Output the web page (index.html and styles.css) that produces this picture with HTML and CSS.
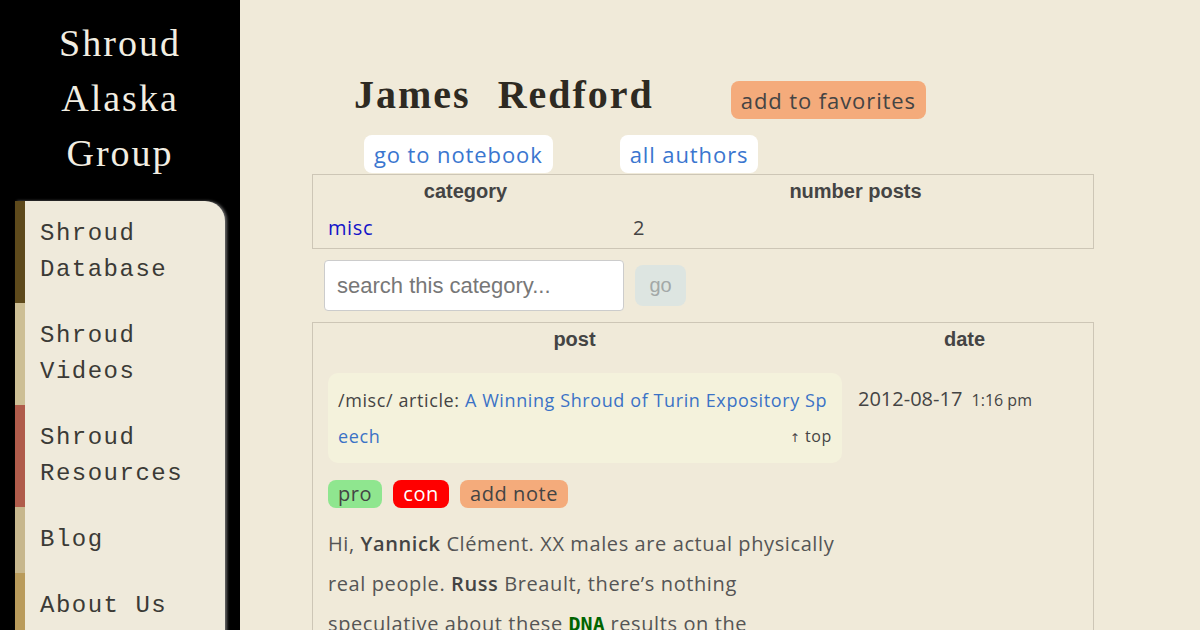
FILE: index.html
```html
<!DOCTYPE html>
<html>
<head>
    <title>James Redford - Shroud Alaska Group</title>
    <link rel="stylesheet" href="styles.css">
</head>
<body>
    <div class="layout">
        <aside class="sidebar">
            <div class="site-title">Shroud Alaska Group</div>
            <nav class="nav">
                <a class="nav-item nav-db" href="#">Shroud Database</a>
                <a class="nav-item nav-videos" href="#">Shroud Videos</a>
                <a class="nav-item nav-res" href="#">Shroud Resources</a>
                <a class="nav-item nav-blog" href="#">Blog</a>
                <a class="nav-item nav-about" href="#">About Us</a>
            </nav>
        </aside>

        <main class="main">
            <div class="author-head">
                <h1>James Redford</h1>
                <a class="btn btn-fav" href="#">add to favorites</a>
            </div>
            <div class="author-links">
                <a class="btn btn-white" href="#">go to notebook</a>
                <a class="btn btn-white" href="#">all authors</a>
            </div>

            <table class="grid cat-table">
                <tr>
                    <th class="col-cat">category</th>
                    <th>number posts</th>
                </tr>
                <tr>
                    <td><a class="cat-link" href="#">misc</a></td>
                    <td>2</td>
                </tr>
            </table>

            <form class="search">
                <input type="text" placeholder="search this category...">
                <button type="button">go</button>
            </form>

            <table class="grid post-table">
                <tr>
                    <th class="col-post">post</th>
                    <th>date</th>
                </tr>
                <tr>
                    <td class="post-cell">
                        <div class="post-box">
                            /misc/ article: <a href="#">A Winning Shroud of Turin Expository Speech</a>
                            <a class="top" href="#"><span class="arrow">&uarr;</span> top</a>
                        </div>
                        <div class="tags">
                            <span class="tag tag-pro">pro</span>
                            <span class="tag tag-con">con</span>
                            <span class="tag tag-note">add note</span>
                        </div>
                        <p class="post-text">Hi, <b>Yannick</b> Clément. XX males are actual physically real people. <b>Russ</b> Breault, there’s nothing speculative about these <code>DNA</code> results on the bloodstains of the Shroud of Turin, which show the man was male but lacked a Y chromosome.</p>
                    </td>
                    <td class="date-cell">
                        <div class="post-date">2012-08-17 <small>1:16 pm</small></div>
                    </td>
                </tr>
            </table>
        </main>
    </div>
</body>
</html>
```

FILE: styles.css
```css
body {
    margin: 0;
    background-color: #f0ead9;
    font-family: "Open Sans", sans-serif;
    letter-spacing: 0.6px;
    color: #444;
}

a {
    text-decoration: none;
}

.layout {
    display: flex;
    min-height: 100vh;
}

/* sidebar */

.sidebar {
    width: 240px;
    flex-shrink: 0;
    background-color: #000;
}

.site-title {
    padding: 16px 20px 0;
    font-family: "Liberation Serif", serif;
    font-size: 38px;
    line-height: 55px;
    letter-spacing: 2px;
    text-align: center;
    color: #f2eee2;
}

.nav {
    margin: 20px 15px 0;
    width: 210px;
    background-color: #efeadb;
    border-top-right-radius: 20px;
    box-shadow: 2px 0 3px #666;
    overflow: hidden;
}

.nav-item {
    display: block;
    padding: 15px 15px;
    border-left: 10px solid;
    font-family: "Liberation Mono", monospace;
    font-size: 24px;
    line-height: 36px;
    letter-spacing: 1.5px;
    color: #3b3a36;
}

.nav-db { border-color: #5e4a1c; }
.nav-videos { border-color: #cdbf95; }
.nav-res { border-color: #b05c4b; }
.nav-blog { border-color: #c7b78d; }
.nav-about { border-color: #b99b5b; }

/* author header */

.author-head {
    display: flex;
    align-items: flex-end;
    gap: 77px;
    padding: 70px 0 0 114px;
}

.author-head h1 {
    margin: 0;
    font-family: "Liberation Serif", serif;
    font-size: 40px;
    line-height: 50px;
    letter-spacing: 2px;
    word-spacing: 15px;
    color: #2e2a22;
}

.btn {
    display: inline-block;
    padding: 0 10px;
    border-radius: 8px;
    font-size: 22px;
    line-height: 38px;
    letter-spacing: 0.9px;
}

.btn-fav {
    margin-bottom: 1px;
    background-color: #f4ab7b;
    color: #444;
}

.btn-white {
    background-color: #fff;
    color: #3a76cf;
}

.author-links {
    display: flex;
    gap: 67px;
    padding: 15px 0 0 124px;
}

/* tables */

.grid {
    margin: 1px 0 0 72px;
    width: 782px;
    border-collapse: collapse;
    border: 1px solid #cdc6b6;
}

.grid th {
    padding: 4px 15px;
    font-family: "Liberation Sans", Arial, sans-serif;
    font-size: 20px;
    line-height: 24px;
    letter-spacing: 0;
    color: #444;
}

.grid td {
    padding: 5px 15px 4px;
    font-size: 20px;
    line-height: 32px;
    vertical-align: top;
}

.col-cat {
    width: 275px;
}

.cat-link {
    color: #1414c8;
}

.search {
    display: flex;
    align-items: center;
    gap: 11px;
    margin: 11px 0 0 84px;
}

.search input {
    box-sizing: border-box;
    width: 300px;
    height: 51px;
    padding: 0 12px;
    border: 1px solid #ccc;
    border-radius: 4px;
    font-family: "Liberation Sans", Arial, sans-serif;
    font-size: 22px;
}

.search input::placeholder {
    color: #777;
}

.search button {
    width: 51px;
    height: 41px;
    border: none;
    border-radius: 8px;
    background-color: #dde5e1;
    font-family: "Liberation Sans", Arial, sans-serif;
    font-size: 20px;
    color: #a3a8a7;
}

.post-table {
    margin-top: 11px;
}

.post-table th {
    padding: 4px 22px 4px 8px;
}

.col-post {
    width: 507px;
}

.grid .post-cell {
    padding: 18px 8px 0 15px;
}

.post-box {
    padding: 9px 10px;
    border-radius: 10px;
    background-color: #f4f2dc;
    font-size: 18px;
    line-height: 36px;
    letter-spacing: 0.6px;
    color: #444;
}

.post-box a {
    color: #3b72c6;
    word-break: break-all;
}

.post-box .top {
    float: right;
    font-size: 16px;
    color: #444;
}

.arrow {
    font-family: "DejaVu Sans", sans-serif;
    font-size: 12px;
    color: #444;
}

.tags {
    display: flex;
    gap: 11px;
    margin-top: 17px;
}

.tag {
    padding: 0 10px;
    border-radius: 8px;
    font-size: 20px;
    line-height: 28px;
    color: #444;
}

.tag-pro { background-color: #8fe68f; }
.tag-con { background-color: #f00; color: #fff; }
.tag-note { background-color: #f4ab7b; }

.post-text {
    margin: 16px 0 0;
    font-size: 20px;
    line-height: 40px;
    color: #555;
}

.post-text b {
    font-weight: 600;
    color: #444;
}

.post-text code {
    font-family: "DejaVu Sans Mono", monospace;
    font-weight: bold;
    letter-spacing: 0;
    color: #006400;
}

.grid .date-cell {
    padding: 18px 15px 0 8px;
}

.post-date {
    padding-top: 8px;
    font-size: 20px;
    line-height: 36px;
    letter-spacing: 0;
    color: #444;
}

.post-date small {
    margin-left: 4px;
    font-size: 16px;
}
```
